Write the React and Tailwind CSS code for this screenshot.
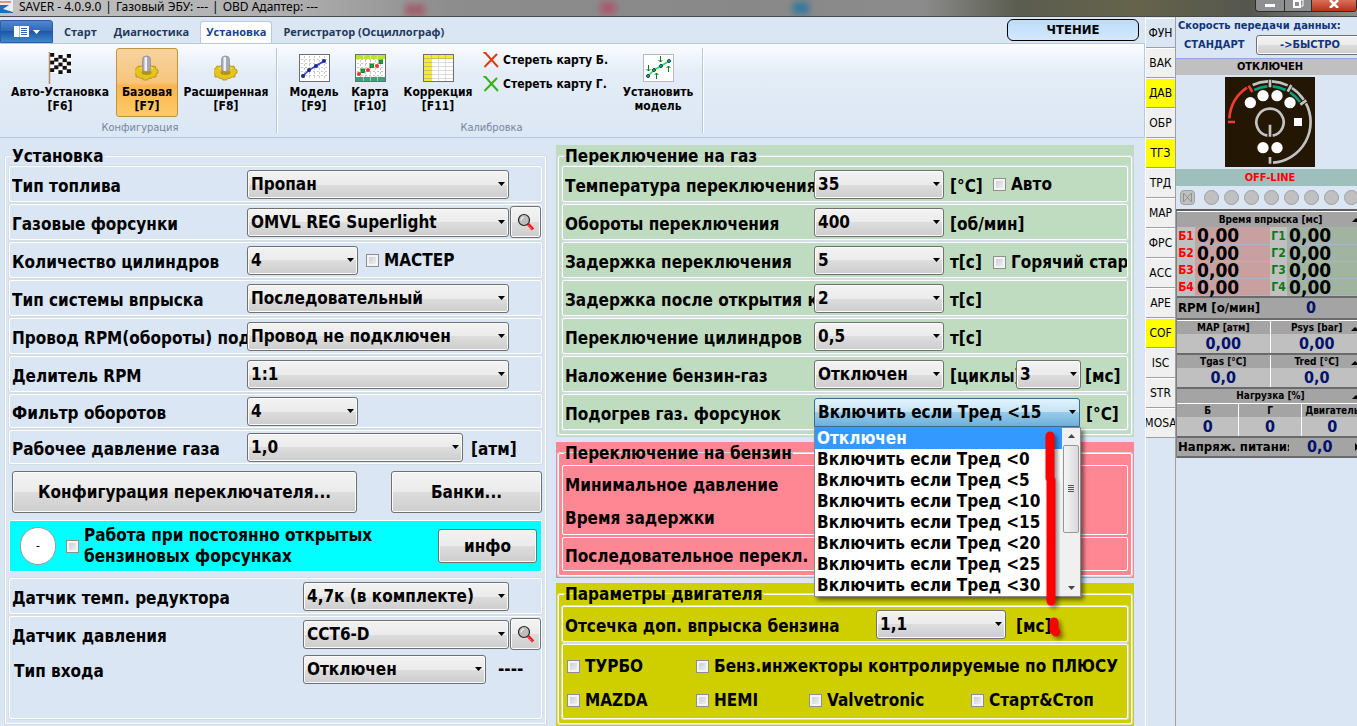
import { useState } from 'react';
import clsx from 'clsx';

const BEVEL = 'bg-[linear-gradient(#f3f3f3,#ebebeb_50%,#dddddd_50%,#cdcdcd)] border border-[#707070] rounded-[3px] shadow-[inset_0_0_0_1px_#fbfbfb]';

const SIDE_TABS = [
  { name: 'ФУН', tone: 'bg-[#dae6f4]' },
  { name: 'ВАК' },
  { name: 'ДАВ', tone: 'bg-[#ffff00]' },
  { name: 'ОБР' },
  { name: 'ТГЗ', tone: 'bg-[#ffff00]' },
  { name: 'ТРД' },
  { name: 'МАР' },
  { name: 'ФРС' },
  { name: 'АСС' },
  { name: 'АРЕ' },
  { name: 'COF', tone: 'bg-[#ffff00]' },
  { name: 'ISC' },
  { name: 'STR' },
  { name: 'MOSA' },
];

const HEATING = ['Отключен', ...[0, 5, 10, 15, 20, 25, 30].map((t) => `Включить если Тред <${t}`)];

function Select({ id, value, className, open }) {
  return (
    <span className={clsx('relative inline-block shrink-0', className)}>
      <select
        id={id}
        defaultValue={value}
        className={clsx(
          'block w-full h-[29px] pl-[3px] pr-4 appearance-none font-bold leading-[27px]',
          open
            ? 'bg-[linear-gradient(#e3f3fb,#c3e3f5_50%,#98cbe8_50%,#6cb0dc)] border border-[#3c6a8e] rounded-t-[3px]'
            : BEVEL
        )}
      >
        <option>{value}</option>
      </select>
      <svg className="absolute right-1 top-3 pointer-events-none" width="7" height="4" viewBox="0 0 7 4">
        <path d="M0 0h7L3.500 4z" fill="#000" />
      </svg>
    </span>
  );
}

function Check({ label, className }) {
  return (
    <label className={clsx('flex items-center gap-[5px] whitespace-nowrap', className)}>
      <input
        type="checkbox"
        className="appearance-none shrink-0 size-[13px] border border-[#8e8f8f] bg-[linear-gradient(135deg,#c4c9d0,#f6f6f6)] shadow-[inset_0_0_0_2px_#f4f4f4] checked:bg-[#4b6a9b]"
      />
      <span>{label}</span>
    </label>
  );
}

function Row({ id, label, labelWidth = 'w-[235px]', height = 'h-9', children }) {
  return (
    <div className={clsx('flex items-center border border-white rounded-[2px] pl-0.5 shadow-[0_0_0_1px_#d3dde3]', height)}>
      <label htmlFor={id} className={clsx('shrink-0 overflow-hidden whitespace-nowrap pt-1', labelWidth)}>
        {label}
      </label>
      {children}
    </div>
  );
}

function Group({ title, tone, gap, children }) {
  return (
    <section className={clsx('px-0.5 pb-0.5 pt-px', tone)}>
      <fieldset className="min-w-0 border border-white rounded-[2px] px-[3px] pb-1 shadow-[0_0_0_1px_#d3dde3]">
        <legend className="px-px ml-0.5 leading-5">{title}</legend>
        <div className={clsx('flex flex-col gap-0.5', gap)}>{children}</div>
      </fieldset>
    </section>
  );
}

function LoupeButton() {
  return (
    <button type="button" aria-label="Поиск" className={clsx('shrink-0 ml-px w-[31px] h-[32px] flex items-center justify-center', BEVEL)}>
      <svg width="18" height="18" viewBox="0 0 18 18">
        <circle cx="7" cy="7" r="5.500" fill="#bdbdbd" stroke="#222" strokeWidth="1.200" />
        <path d="M4 7.500a3.500 3.500 0 0 1 3-3.500" fill="none" stroke="#fff" />
        <path d="M11 11l5 5.500" stroke="#f01414" strokeWidth="3.200" />
        <path d="M11.500 12.500l3.500 4" stroke="#ffd0d0" strokeWidth="1" strokeDasharray="1 1" />
      </svg>
    </button>
  );
}

/* ribbon icons */

function FlagIcon() {
  const sag = [0, 1, 2, 1.5, 1];
  const cells = [];
  for (let r = 0; r < 5; r++) {
    for (let c = 0; c < 5; c++) {
      if ((r + c) % 2 === 0) cells.push([2 + c * 4.2, 1 + r * 3.8 + sag[c]]);
    }
  }
  return (
    <svg width="24" height="32" viewBox="0 0 24 32">
      <path d="M2 1q8 5 21 1v19q-13 2-21-1z" fill="#fff" />
      {cells.map(([x, y]) => (
        <rect key={`${x}-${y}`} x={x} y={y} width="4.200" height="3.800" fill="#111" />
      ))}
      <path d="M1.500 0v32" stroke="#b98a63" strokeWidth="1.500" />
    </svg>
  );
}

function GearIcon() {
  return (
    <svg width="24" height="28" viewBox="0 0 24 28">
      <path
        d="M3 12l3 .5 2-2h7l2 2 3-.5 1 3 2 1v3l-2 1 0 3-3 0-2 1.500-2-.5-1.500 2h-4l-1-2-2 .5-1.500-1.500-3 0v-3l-2-1v-3l2-1z"
        fill="#e4c51e"
        stroke="#a98a1a"
        strokeWidth=".8"
      />
      <path d="M5 15l3-2h7l3 2" fill="none" stroke="#f7ec7a" />
      <ellipse cx="11.500" cy="18.500" rx="5" ry="2.500" fill="#b8930f" />
      <rect x="7.500" y="2" width="8" height="16" rx="3.500" fill="#a9a9b4" stroke="#85858f" strokeWidth=".6" />
      <rect x="9.500" y="3" width="2.500" height="14" rx="1" fill="#f0f0f6" />
    </svg>
  );
}

function Dots() {
  return (
    <g stroke="#c9c9c9" strokeDasharray="2 2">
      <path d="M2 5.500h27M2 9.500h27M2 13.500h27M2 17.500h27M2 21.500h27M5.500 2v24M10.500 2v24M15.500 2v24M20.500 2v24M25.500 2v24" />
    </g>
  );
}

function ModelIcon() {
  const pts = [[4, 22], [10, 16], [17, 12], [25, 7]];
  return (
    <svg width="31" height="28" viewBox="0 0 31 28">
      <rect x=".5" y=".5" width="30" height="27" fill="#fff" stroke="#6d6d75" />
      <Dots />
      <path d="M4 22l6-6 7-4 8-5" fill="none" stroke="#3340c8" strokeWidth="1.500" />
      {pts.map(([x, y]) => (
        <circle key={x} cx={x} cy={y} r="2" fill="#1c2594" />
      ))}
    </svg>
  );
}

function MapIcon() {
  return (
    <svg width="31" height="28" viewBox="0 0 31 28">
      <rect x=".5" y=".5" width="30" height="27" fill="#fff" stroke="#6d6d75" />
      <Dots />
      <path d="M1 1h29v4H1z" fill="#b9e61e" />
      <path d="M1 23h29v4H1z" fill="#3aa378" />
      <path d="M8.500 1v4m7-4v4m7-4v4M8.500 23v4m7-4v4m7-4v4" stroke="#fff" strokeOpacity=".5" />
      {[[6, 15], [15, 10], [24, 6]].map(([x, y]) => (
        <rect key={x} x={x} y={y} width="3.500" height="3.500" fill="#19a83a" stroke="#046b1a" strokeWidth=".8" />
      ))}
      {[[4, 20], [13, 16], [22, 12]].map(([x, y]) => (
        <circle key={x} cx={x} cy={y} r="2" fill="#e8352a" />
      ))}
    </svg>
  );
}

function CorrectionIcon() {
  return (
    <svg width="31" height="28" viewBox="0 0 31 28">
      <path d="M0 0h31v28H0z" fill="#fff" />
      <path d="M1 1h29v4H1zM1 5h8v22H1z" fill="#f4f01c" />
      <path d="M9 8.500h21M9 12.500h21M9 16.500h21M9 20.500h21M9 24.500h21M15.500 5v22M22.500 5v22" stroke="#dcdcdc" />
      <path d="M1 4.500h29M1 8.500h8M1 12.500h8M1 16.500h8M1 20.500h8M1 24.500h8M8.500 1v4M15.500 1v4M22.500 1v4" stroke="#c9bf6a" />
      <rect x=".5" y=".5" width="30" height="27" fill="none" stroke="#6d6d75" />
    </svg>
  );
}

function SetModelIcon() {
  return (
    <svg width="31" height="28" viewBox="0 0 31 28">
      <rect x=".5" y=".5" width="30" height="27" fill="#fff" stroke="#bdb8bd" />
      <path d="M5 22l6-6 7-4 8-5" fill="none" stroke="#22e03a" strokeWidth="1.500" />
      {[[5, 22], [11, 16], [18, 12], [26, 7]].map(([x, y]) => (
        <circle key={x} cx={x} cy={y} r="1.500" fill="#1ed43a" stroke="#0c2a80" />
      ))}
      <path
        d="M5.500 11v6m-2-2l2 2 2-2M17.500 2v6m-2-2l2 2 2-2M13.500 25v-6m-2 2l2-2 2 2M25.500 18v-6m-2 2l2-2 2 2"
        fill="none"
        stroke="#0d7a1c"
      />
    </svg>
  );
}

function CrossIcon({ color }) {
  return (
    <svg width="16" height="16" viewBox="0 0 16 16" className="shrink-0">
      <path d="M.5 1l1.500-.5L15 15M14 2L1.500 15" fill="none" stroke={color} strokeWidth="2" />
    </svg>
  );
}

function RibbonButton({ icon, lines, className, active }) {
  return (
    <button
      type="button"
      className={clsx(
        'flex flex-col items-center h-[69px] pt-0.5 border rounded-[3px] leading-[14px] whitespace-nowrap',
        active
          ? 'border-[#c2953a] bg-[linear-gradient(#f8d3a0,#f7c57c_50%,#fbb44f_55%,#fecb68)]'
          : 'border-transparent',
        className
      )}
    >
      <span className="flex h-[34px] items-center justify-center">{icon}</span>
      {lines.map((l) => (
        <span key={l}>{l}</span>
      ))}
    </button>
  );
}

function RibbonGroup({ title, children }) {
  return (
    <div className="flex flex-col my-1 border-r border-[#b3c7e0] shadow-[1px_0_0_#fff]">
      <div className="flex items-start">{children}</div>
      <div className="text-center font-normal text-[11px] leading-4 mt-[3px] pl-1 text-[#76869f]">{title}</div>
    </div>
  );
}

function TitleBar() {
  return (
    <header className="relative flex items-start h-[17px] overflow-hidden border-b border-[#4a4a4a] bg-[linear-gradient(90deg,#c3c3c3,#adadad_22%,#8d8d8d_33%,#888888_55%,#8b8b8b_68%,#5b5d50_75%,#65634a_84%,#55564f_92%,#8a8a8c)]">
      {/* things behind the glass frame */}
      <div className="absolute inset-0 blur-[3px]">
        <span className="absolute left-[405px] top-1 w-5 h-3 bg-[#a0606e]" />
        <span className="absolute left-[600px] top-0.5 w-4 h-3 bg-[#a85a70]" />
        <span className="absolute left-[793px] top-0.5 w-4 h-3 bg-[#35789c]" />
      </div>
      <svg width="13" height="13" viewBox="0 0 13 13" className="relative shrink-0">
        <path d="M0 0h13v13H0z" fill="#e8eef4" />
        <path d="M0 5h9L3 9l10 3v1H0z" fill="#1f6fb4" />
        <path d="M0 2h11" stroke="#d33" />
      </svg>
      <h1 className="relative flex gap-1 ml-1.5 font-['Noto_Sans'] font-normal text-[12px] leading-[13px]">
        <span>SAVER - 4.0.9.0</span>
        <span>|</span>
        <span>Газовый ЭБУ: ---</span>
        <span>|</span>
        <span>OBD Адаптер: ---</span>
      </h1>
      <div className="relative ml-auto flex h-3 rounded-b-[4px] border border-t-0 border-[#2c2c2c] overflow-hidden">
        <button type="button" aria-label="Свернуть" className="w-[29px] flex justify-center items-center border-r border-[#2c2c2c] bg-[#8d8f91]">
          <span className="w-2.5 h-[3px] bg-white" />
        </button>
        <button type="button" aria-label="Развернуть" className="w-[27px] flex justify-center items-start border-r border-[#2c2c2c] bg-[#8d8f91]">
          <svg width="12" height="9" viewBox="0 0 12 9">
            <path d="M4 0h7v6H9" fill="none" stroke="#fff" />
            <path d="M2 1h6v6H2z" fill="none" stroke="#fff" strokeWidth="2" />
          </svg>
        </button>
        <button type="button" aria-label="Закрыть" className="w-[44px] flex justify-center items-start bg-[linear-gradient(#d9705a,#b8301a)]">
          <svg width="10" height="8" viewBox="0 0 10 8">
            <path d="M1 0l8 8M9 0L1 8" stroke="#fff" strokeWidth="2.500" />
          </svg>
        </button>
      </div>
    </header>
  );
}

function Ribbon() {
  const [tab, setTab] = useState('Установка');
  return (
    <div className="font-bold text-[12px]">
      <nav className="flex items-end h-[26px] text-[#1e395b]">
        <button type="button" aria-label="Меню" className="w-[53px] h-[23px] flex items-center justify-center gap-1 rounded-tr-[3px] border border-[#2a5ea8] bg-[linear-gradient(#4f87cf,#2f66b4_50%,#1f57a8_50%,#3f86cc)]">
          <svg width="15" height="11" viewBox="0 0 15 11">
            <path d="M0 0h15v11H0z" fill="#fff" />
            <path d="M7 2.500h6M7 4.500h6M7 6.500h6M7 8.500h6" stroke="#2c62b0" />
            <path d="M5.500 0v11" stroke="#9db8dc" />
          </svg>
          <svg width="7" height="4" viewBox="0 0 7 4">
            <path d="M0 0h7L3.500 4z" fill="#fff" />
          </svg>
        </button>
        {['Старт', 'Диагностика', 'Установка', 'Регистратор (Осциллограф)'].map((t) => (
          <button
            key={t}
            type="button"
            onClick={() => setTab(t)}
            className={clsx(
              "h-[22px] px-[5px] ml-[5px] text-[11px] font-['Open_Sans'] font-bold whitespace-nowrap rounded-t-[3px] border border-b-0",
              tab === t ? 'bg-white border-[#b5c9e2] text-[#15428b]' : 'border-transparent'
            )}
          >
            {t}
          </button>
        ))}
        <button type="button" className="ml-auto mr-1.5 mb-0.5 w-[132px] h-[22px] rounded-[6px] border border-black bg-[linear-gradient(#bcdcfb,#d4e8fb)] text-[13px] text-black">
          ЧТЕНИЕ
        </button>
      </nav>
      <div className="flex h-[95px] border-y border-r border-[#b5c9e2] bg-[linear-gradient(#fbfdff,#e4edf7_30%,#dbe7f4)]">
        <RibbonGroup title="Конфигурация">
          <RibbonButton className="w-[112px] ml-1" icon={<FlagIcon />} lines={['Авто-Установка', '[F6]']} />
          <RibbonButton className="w-[62px]" active icon={<GearIcon />} lines={['Базовая', '[F7]']} />
          <RibbonButton className="w-[96px] mr-0.5" icon={<GearIcon />} lines={['Расширенная', '[F8]']} />
        </RibbonGroup>
        <RibbonGroup title="Калибровка">
          <RibbonButton className="w-[58px] ml-2" icon={<ModelIcon />} lines={['Модель', '[F9]']} />
          <RibbonButton className="w-[54px]" icon={<MapIcon />} lines={['Карта', '[F10]']} />
          <RibbonButton className="w-[82px]" icon={<CorrectionIcon />} lines={['Коррекция', '[F11]']} />
          <div className="w-[135px] pl-1 pt-1 flex flex-col gap-2">
            <button type="button" className="flex items-center gap-1 whitespace-nowrap leading-4">
              <CrossIcon color="#e03c14" />
              Стереть карту Б.
            </button>
            <button type="button" className="flex items-center gap-1 whitespace-nowrap leading-4">
              <CrossIcon color="#3cb01c" />
              Стереть карту Г.
            </button>
          </div>
          <RibbonButton className="w-[88px]" icon={<SetModelIcon />} lines={['Установить', 'модель']} />
        </RibbonGroup>
      </div>
    </div>
  );
}

function SetupGroup() {
  return (
    <Group title="Установка">
      <Row id="fuel" label="Тип топлива">
        <Select id="fuel" value="Пропан" className="w-[262px]" />
      </Row>
      <Row id="injectors" label="Газовые форсунки">
        <Select id="injectors" value="OMVL REG Superlight" className="w-[262px]" />
        <LoupeButton />
      </Row>
      <Row id="cylinders" label="Количество цилиндров">
        <Select id="cylinders" value="4" className="w-[111px]" />
        <Check label="МАСТЕР" className="ml-2" />
      </Row>
      <Row id="system" label="Тип системы впрыска">
        <Select id="system" value="Последовательный" className="w-[262px]" />
      </Row>
      <Row id="wire" label="Провод RPM(обороты) подключен">
        <Select id="wire" value="Провод не подключен" className="w-[262px]" />
      </Row>
      <Row id="divider" label="Делитель RPM">
        <Select id="divider" value="1:1" className="w-[262px]" />
      </Row>
      <Row id="filter" label="Фильтр оборотов" height="h-[34px]">
        <Select id="filter" value="4" className="w-[111px]" />
      </Row>
      <Row id="pressure" label="Рабочее давление газа" height="h-[34px]">
        <Select id="pressure" value="1,0" className="w-[216px]" />
        <span className="ml-2 pt-1">[атм]</span>
      </Row>
      <div className="flex justify-between pl-[3px] mt-[5px] mb-[5px]">
        <button type="button" className={clsx('w-[345px] h-[42px]', BEVEL)}>Конфигурация переключателя...</button>
        <button type="button" className={clsx('w-[151px] h-[42px]', BEVEL)}>Банки...</button>
      </div>
      <div className="flex items-center h-[52px] mb-1 bg-[#00ffff] border border-white pl-2.5 pr-1">
        <span className="w-9 h-[38px] shrink-0 rounded-full bg-white border border-[#9a9a9a] flex items-center justify-center text-[12px] font-normal">-</span>
        <label className="flex items-center gap-[5px] ml-2.5 leading-[21px] whitespace-nowrap">
          <input
            type="checkbox"
            className="appearance-none shrink-0 size-[13px] border border-[#8e8f8f] bg-[linear-gradient(135deg,#c4c9d0,#f6f6f6)] shadow-[inset_0_0_0_2px_#f4f4f4]"
          />
          <span>
            Работа при постоянно открытых
            <br />
            бензиновых форсунках
          </span>
        </label>
        <button type="button" className={clsx('ml-auto w-[99px] h-[34px] shrink-0', BEVEL)}>инфо</button>
      </div>
      <Row id="tsensor" label="Датчик темп. редуктора" labelWidth="w-[291px]">
        <Select id="tsensor" value="4,7к (в комплекте)" className="w-[206px]" />
      </Row>
      <div className="h-[103px] border border-white rounded-[2px] pl-0.5 shadow-[0_0_0_1px_#d3dde3]">
        <div className="flex items-center h-[34px]">
          <label htmlFor="psensor" className="w-[291px] shrink-0 pt-1">Датчик давления</label>
          <Select id="psensor" value="CCT6-D" className="w-[206px]" />
          <LoupeButton />
        </div>
        <div className="flex items-center h-9">
          <label htmlFor="input" className="w-[291px] shrink-0 pl-0.5 pt-1">Тип входа</label>
          <Select id="input" value="Отключен" className="w-[183px]" />
          <span className="ml-3">----</span>
        </div>
      </div>
    </Group>
  );
}

function HeatingList() {
  const [selected, setSelected] = useState(HEATING[0]);
  return (
    <div className="absolute z-10 left-0 top-full w-[267px] h-[170px] flex bg-white border border-[#8a8a8a] shadow-[3px_3px_4px_#00000080]">
      <ul role="listbox" aria-label="Подогрев газ. форсунок" className="flex-1">
        {HEATING.map((h) => (
          <li
            key={h}
            role="option"
            aria-selected={h === selected}
            onClick={() => setSelected(h)}
            className={clsx('h-[21px] leading-[21px] pl-0.5 whitespace-nowrap', h === selected && 'bg-[#3399ff] text-white')}
          >
            {h}
          </li>
        ))}
      </ul>
      <div className="w-[18px] flex flex-col items-center justify-between bg-[#f0f0f0]">
        <svg width="7" height="17" viewBox="0 0 7 17">
          <path d="M0 10h7L3.500 6z" fill="#444" />
        </svg>
        <div className="mb-auto w-4 h-[88px] flex flex-col items-center justify-center gap-px border border-[#979797] rounded-[2px] bg-[linear-gradient(90deg,#f5f5f5,#d9d9dc)]">
          <span className="w-1.5 h-px bg-[#555]" />
          <span className="w-1.5 h-px bg-[#555]" />
          <span className="w-1.5 h-px bg-[#555]" />
          <span className="w-1.5 h-px bg-[#555]" />
        </div>
        <svg width="7" height="17" viewBox="0 0 7 17">
          <path d="M0 7h7L3.500 11z" fill="#444" />
        </svg>
      </div>
      {/* red marker strokes */}
      <svg className="absolute left-0 top-0 overflow-visible pointer-events-none drop-shadow-[3px_3px_2px_#00000070]" width="267" height="210" viewBox="0 0 267 210">
        <g fill="none" stroke="#f00" strokeLinecap="round" strokeLinejoin="round">
          <path d="M235 8v42l1 2v121" strokeWidth="9" />
          <path d="M239 194v8l2 2" strokeWidth="9" />
        </g>
      </svg>
    </div>
  );
}

function GasGroup() {
  const w = 'w-[249px]';
  return (
    <Group title="Переключение на газ" tone="bg-[#c0dcc0]">
      <Row id="swtemp" label="Температура переключения" labelWidth={w}>
        <Select id="swtemp" value="35" className="w-[130px]" />
        <span className="ml-1.5 pt-1 w-[43px]">[°C]</span>
        <Check label="Авто" />
      </Row>
      <Row id="swrpm" label="Обороты переключения" labelWidth={w}>
        <Select id="swrpm" value="400" className="w-[130px]" />
        <span className="ml-1.5 pt-1">[об/мин]</span>
      </Row>
      <Row id="swdelay" label="Задержка переключения" labelWidth={w}>
        <Select id="swdelay" value="5" className="w-[130px]" />
        <span className="ml-1.5 pt-1 w-[43px] shrink-0">т[с]</span>
        <Check label="Горячий старт" className="w-[134px] shrink-0 overflow-hidden pt-1" />
      </Row>
      <Row id="opendelay" label="Задержка после открытия клапана" labelWidth={w}>
        <Select id="opendelay" value="2" className="w-[130px]" />
        <span className="ml-1.5 pt-1">т[с]</span>
      </Row>
      <Row id="cylswitch" label="Переключение цилиндров" labelWidth={w}>
        <Select id="cylswitch" value="0,5" className="w-[130px]" />
        <span className="ml-1.5 pt-1">т[с]</span>
      </Row>
      <Row id="overlap" label="Наложение бензин-газ" labelWidth={w}>
        <Select id="overlap" value="Отключен" className="w-[130px]" />
        <label htmlFor="cycles" className="ml-1.5 pt-1 w-[66px] shrink-0 overflow-hidden whitespace-nowrap">[циклы]</label>
        <Select id="cycles" value="3" className="w-[65px]" />
        <span className="ml-1 pt-1">[мс]</span>
      </Row>
      <Row id="heating" label="Подогрев газ. форсунок" labelWidth={w}>
        <div className="relative w-[266px] shrink-0 font-bold">
          <Select id="heating" value="Включить если Тред <15" className="w-full align-top" open />
          <HeatingList />
        </div>
        <span className="ml-1.5 pt-1">[°C]</span>
      </Row>
    </Group>
  );
}

function PetrolGroup() {
  return (
    <Group title="Переключение на бензин" tone="bg-[#ff8793]" gap="pt-0.5">
      <div className="h-[70px] flex flex-col justify-around border border-white rounded-[2px] pl-0.5 pt-0.5">
        <span>Минимальное давление</span>
        <span>Время задержки</span>
      </div>
      <div className="h-[34px] flex items-center border border-white rounded-[2px] pl-0.5 pt-1">
        <span className="w-[249px] overflow-hidden whitespace-nowrap">Последовательное перекл. на бензин</span>
      </div>
    </Group>
  );
}

function EngineGroup() {
  return (
    <Group title="Параметры двигателя" tone="bg-[#cfcf00]" gap="pt-0.5">
      <Row id="cutoff" label="Отсечка доп. впрыска бензина" labelWidth="w-[311px]">
        <Select id="cutoff" value="1,1" className="w-[130px]" />
        <span className="ml-2.5 pt-1">[мс]</span>
      </Row>
      <div className="h-[75px] flex flex-col gap-3.5 pt-[11px] border border-white rounded-[2px] pl-1 shadow-[0_0_0_1px_#d3dde3]">
        <div className="flex">
          <Check label="ТУРБО" className="w-[129px]" />
          <Check label="Бенз.инжекторы контролируемые по ПЛЮСУ" />
        </div>
        <div className="flex">
          <Check label="MAZDA" className="w-[129px]" />
          <Check label="HEMI" className="w-[113px]" />
          <Check label="Valvetronic" className="w-[162px]" />
          <Check label="Старт&Стоп" />
        </div>
      </div>
    </Group>
  );
}

function Gauge() {
  return (
    <svg width="90" height="90" viewBox="0 0 270 270" className="block mx-auto bg-[#231704]">
      <g fill="none" strokeWidth="8">
        <g stroke="#f03c32">
          <path d="M13 124A122 122 0 0 1 66 32" />
          <path d="M9 135h21M71 26l11 19" />
        </g>
        <g stroke="#c3c3c3">
          <path d="M83 24A122 122 0 0 1 129 13M141 13A122 122 0 0 1 188 25M201 33A122 122 0 0 1 236 68" />
          <path d="M135 8v23M199 24l-11 20M244 70l-18 13M135 240v20" />
          <path d="M243 79A122 122 0 0 1 144 257" />
          <path d="M127 176A41 41 0 1 1 143 176M135 143v36" />
        </g>
        <g stroke="#0f9a80">
          <path d="M88 39A107 107 0 0 1 127 28M143 28A107 107 0 0 1 182 39M195 46A107 107 0 0 1 225 75" />
        </g>
      </g>
      <g fill="#fff">
        {[[76, 77], [114, 56], [156, 56], [195, 77], [114, 212], [156, 212]].map(([x, y]) => (
          <circle key={`${x}-${y}`} cx={x} cy={y} r="17" />
        ))}
        <rect x="207" y="123" width="24" height="24" />
      </g>
    </svg>
  );
}

function UpMark() {
  return (
    <svg width="8" height="4" viewBox="0 0 8 4" className="absolute right-1 top-1.5">
      <path d="M0 4h8L4 0z" fill="#000" />
    </svg>
  );
}

function Meter({ title, value, mark }) {
  return (
    <div className="flex-1 min-w-0 text-center bg-[#c0c0c0] border-r border-white">
      <div className="relative h-[13px] bg-[#a4a4a4] text-[10px] leading-[13px] whitespace-nowrap overflow-hidden">
        {title}
        {mark && <UpMark />}
      </div>
      <div className="h-[19px] text-[16px] leading-[19px] text-[#00126b]">{value}</div>
    </div>
  );
}

function StatusPanel() {
  return (
    <aside className="w-[182px] shrink-0 overflow-hidden border-l border-[#a0a0a0] font-bold text-[12px]">
      <div className="w-[188px]">
        <p className="pt-px pl-0.5 leading-4 text-[11px] text-[#10357c] whitespace-nowrap">Скорость передачи данных:</p>
        <div className="flex items-center h-[23px] pb-px pl-2 text-[#10357c]">
          <span className="w-[72px] text-[11px]">СТАНДАРТ</span>
          <button type="button" className={clsx('flex-1 h-5 text-[11px]', BEVEL)}>-&gt;БЫСТРО</button>
        </div>
        <div className="h-[17px] mt-px border-t border-[#8ea9e8] bg-[#c0c0c0] text-center text-[11px] leading-4">ОТКЛЮЧЕН</div>
        <div className="py-0.5">
          <Gauge />
        </div>
        <div className="h-[17px] bg-[#9fbfbd] text-center text-[11px] leading-[17px] text-[#f00]">OFF-LINE</div>
        <div className="flex items-center h-[23px] pl-1 gap-[5px]">
          <span className="size-[15px] mr-1 flex items-center justify-center border border-[#a0a0a0] rounded-[4px] bg-[#c0c0c0]">
            <svg width="9" height="9" viewBox="0 0 9 9">
              <path d="M.5 0v9l8-9v9z" fill="none" stroke="#8f8f8f" />
            </svg>
          </span>
          {[0, 1, 2, 3, 4, 5, 6, 7].map((i) => (
            <span key={i} className="size-[15px] shrink-0 border border-[#a0a0a0] rounded-full bg-[#c0c0c0]" />
          ))}
        </div>
        <div className="border-t-2 border-[#5d5d5d] bg-[#c0c0c0]">
          <div className="border-l border-[#808080]">
            <div className="relative h-4 border-t border-white bg-[#a4a4a4] text-center text-[10px] leading-4">
              Время впрыска [мс]
              <UpMark />
            </div>
            <table className="w-full border-collapse">
              <tbody>
                {[1, 2, 3, 4].map((n) => (
                  <tr key={n} className="h-[17px] leading-4">
                    <th className="w-[18px] p-0 text-[#f00]">Б{n}</th>
                    <td className="w-[75px] p-0 pl-0.5 bg-[#c8a0a0] border-b border-[#a9b4c8] text-[19px] leading-4">0,00</td>
                    <th className="w-[17px] p-0 text-[#0a7a14]">Г{n}</th>
                    <td className="p-0 pl-0.5 bg-[#a0b4a0] border-b border-[#a9b4c8] text-[19px] leading-4">0,00</td>
                  </tr>
                ))}
              </tbody>
            </table>
            <div className="flex items-center h-6 border-y-2 border-[#6a6a6a] bg-[#a4a4a4] pl-px">
              <span className="w-[128px] text-[13px]">RPM [о/мин]</span>
              <span className="text-[16px] text-[#00126b]">0</span>
            </div>
            <div className="flex border-t border-white">
              <Meter title="МАР [атм]" value="0,00" />
              <Meter title="Psys [bar]" value="0,00" mark />
            </div>
            <div className="flex border-t-2 border-[#6a6a6a]">
              <Meter title="Tgas [°C]" value="0,0" />
              <Meter title="Tred [°C]" value="0,0" mark />
            </div>
            <div className="relative h-4 border-t-2 border-[#6a6a6a] bg-[#a4a4a4] text-center text-[10px] leading-[14px]">
              Нагрузка [%]
              <UpMark />
            </div>
            <div className="flex border-t border-white">
              <Meter title="Б" value="0" />
              <Meter title="Г" value="0" />
              <Meter title="Двигатель" value="0" />
            </div>
            <div className="relative flex items-center h-[22px] border-y-2 border-[#6a6a6a] bg-[#a4a4a4] pl-px">
              <span className="w-[111px] mr-[18px] shrink-0 overflow-hidden whitespace-nowrap text-[13px]">Напряж. питания</span>
              <span className="text-[16px] text-[#00126b]">0,0</span>
              <svg width="4" height="8" viewBox="0 0 4 8" className="absolute right-[5px]">
                <path d="M0 0l4 4-4 4z" fill="#000" />
              </svg>
            </div>
          </div>
        </div>
      </div>
    </aside>
  );
}

export default function App() {
  return (
    <div className="min-h-screen flex flex-col overflow-hidden bg-[#dae6f4] text-black font-['DejaVu_Sans_Condensed','DejaVu_Sans',sans-serif]">
      <TitleBar />
      <div className="flex flex-1">
        <div className="flex-1 min-w-0">
          <Ribbon />
          <main className="grid grid-cols-[545fr_578fr] gap-2 pl-[3px] pr-[11px] pt-[7px] font-bold text-[17px] leading-5">
            <SetupGroup />
            <div className="flex flex-col gap-[5px]">
              <GasGroup />
              <PetrolGroup />
              <EngineGroup />
            </div>
          </main>
        </div>
        <nav className="w-[30px] shrink-0 border-l border-white pt-px">
          {SIDE_TABS.map(({ name, tone }) => (
            <button
              key={name}
              type="button"
              className={clsx('flex items-center justify-center w-full h-[30px] overflow-hidden border-b border-[#a0a0a0] text-[12px] shadow-[inset_0_1px_0_#fff]', tone || 'bg-[#f0f0f0]')}
            >
              {name}
            </button>
          ))}
        </nav>
        <StatusPanel />
      </div>
    </div>
  );
}
